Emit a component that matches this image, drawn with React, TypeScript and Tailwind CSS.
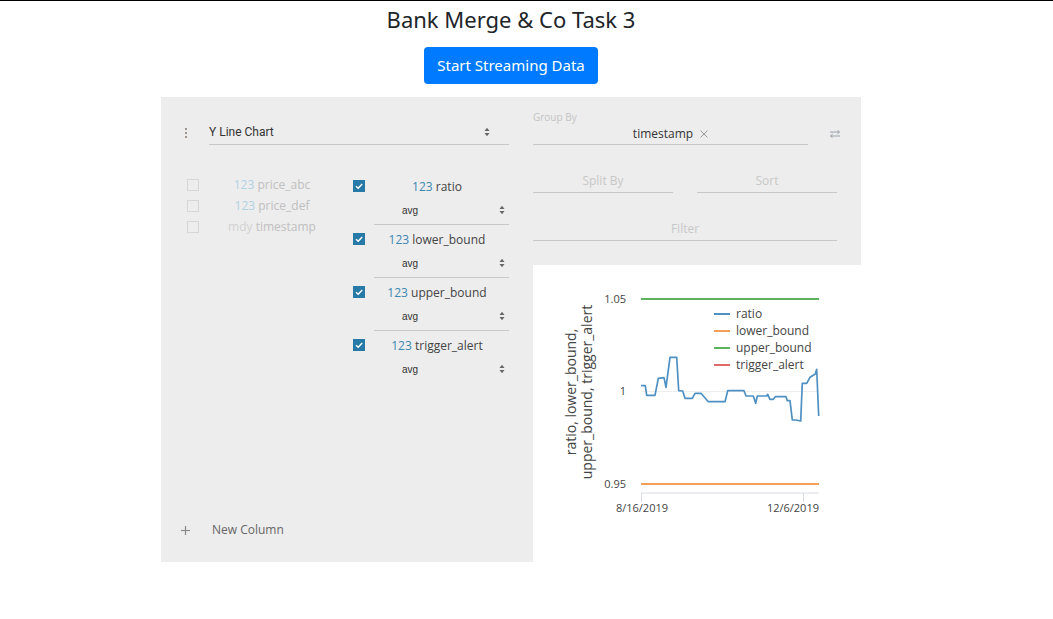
import React from "react";

const inactive = [
  { type: "123", name: "price_abc" },
  { type: "123", name: "price_def" },
  { type: "mdy", name: "timestamp" },
];

const active = ["ratio", "lower_bound", "upper_bound", "trigger_alert"];

const ratioPts =
  "641,385.7 645.3,385.7 646.7,395.3 655,395.3 658.3,378.3 664,377.7 666,387.3 670,357.3 676.7,357.3 678.7,390.7 682.7,391 685,398.3 692.3,398.3 695,393.3 701,393.3 708.3,401.7 725,401.7 727.7,390.7 744,390.7 746,396 753.3,396 755.7,403.3 757.3,396 766.7,396 767.7,394.3 770,399.3 773.3,399.3 775.3,396.7 786,396.7 787.3,400.7 790,400.7 792.3,420 795.7,420 800.7,421 802.3,383.3 806.7,383.3 810,377.3 815.3,374 816.7,369.3 818.7,416";

const legend = [
  { label: "ratio", color: "#4f90c3" },
  { label: "lower_bound", color: "#f5a05a" },
  { label: "upper_bound", color: "#5cb35c" },
  { label: "trigger_alert", color: "#e06a6a" },
];

function Arrows() {
  return (
    <svg width="6" height="10" viewBox="0 0 6 10" className="shrink-0">
      <polygon points="0.5,4 3,0.8 5.5,4" fill="#666" />
      <polygon points="0.5,6 3,9.2 5.5,6" fill="#666" />
    </svg>
  );
}

function Box({ on }: { on: boolean }) {
  if (!on) return <span className="block h-[12px] w-[12px] shrink-0 border border-[#d6d6d6]" />;
  return (
    <span className="flex h-[12px] w-[12px] shrink-0 items-center justify-center bg-[#2779a7]">
      <svg width="10" height="10" viewBox="0 0 10 10">
        <polyline points="2,5.2 4.2,7.3 8.2,3" fill="none" stroke="#fff" strokeWidth="1.4" />
      </svg>
    </span>
  );
}

function Chart() {
  return (
    <svg width="328" height="297" viewBox="533 265 328 297" className="block">
      <line x1="641" y1="391.5" x2="818" y2="391.5" stroke="#eeeeee" strokeWidth="1" />
      <line x1="641" y1="299" x2="819" y2="299" stroke="#5cb35c" strokeWidth="2" />
      <line x1="641" y1="484" x2="819" y2="484" stroke="#f5a05a" strokeWidth="2" />
      <polyline points={ratioPts} fill="none" stroke="#4f90c3" strokeWidth="1.7" strokeLinejoin="round" />
      <line x1="641" y1="493" x2="819" y2="493" stroke="#d8dce6" strokeWidth="1" />
      <line x1="641.5" y1="493" x2="641.5" y2="502" stroke="#d8dce6" strokeWidth="1" />
      <line x1="803.5" y1="493" x2="803.5" y2="502" stroke="#d8dce6" strokeWidth="1" />
      <g fontSize="11" fill="#444">
        <text x="626" y="303" textAnchor="end">1.05</text>
        <text x="626" y="395" textAnchor="end">1</text>
        <text x="626" y="488" textAnchor="end">0.95</text>
        <text x="642" y="512" textAnchor="middle">8/16/2019</text>
        <text x="819" y="512" textAnchor="end">12/6/2019</text>
      </g>
      <g fontSize="14" fill="#444" textAnchor="middle">
        <text x="576" y="392" transform="rotate(-90 576 392)">ratio, lower_bound,</text>
        <text x="592" y="392" transform="rotate(-90 592 392)">upper_bound, trigger_alert</text>
      </g>
      {legend.map((l, i) => (
        <g key={l.label}>
          <line x1="714" y1={314 + i * 17} x2="730" y2={314 + i * 17} stroke={l.color} strokeWidth="2" />
          <text x="736" y={318 + i * 17} fontSize="12" fill="#444">
            {l.label}
          </text>
        </g>
      ))}
    </svg>
  );
}

export default function App() {
  return (
    <div className="min-h-[619px] border-t border-black bg-white font-['Open_Sans',sans-serif]">
      <div className="flex w-[1022px] flex-col items-center">
        <h1 className="mt-[3px] font-['Noto_Sans',sans-serif] text-[22px] leading-[30px] text-[#212529]">
          Bank Merge &amp; Co Task 3
        </h1>
        <button className="mt-[13px] h-[37px] rounded-[4px] bg-[#007bff] px-[13px] font-['Noto_Sans',sans-serif] text-[15px] text-white">
          Start Streaming Data
        </button>

        <div className="mt-[13px] flex h-[465px] w-[700px]">
          {/* settings column */}
          <div className="flex w-[372px] flex-col bg-[#ededed] pt-[23px]">
            <div className="flex items-center pl-[22px]">
              <div className="flex w-[26px] flex-col gap-[2px] pl-[2px]">
                <span className="block h-[2px] w-[2px] bg-[#a0968c]" />
                <span className="block h-[2px] w-[2px] bg-[#a0968c]" />
                <span className="block h-[2px] w-[2px] bg-[#a0968c]" />
              </div>
              <div className="flex h-[25px] w-[300px] items-center justify-between border-b border-[#c8c8c8] pr-[19px] font-['Roboto',sans-serif] text-[12px] text-[#333]">
                <span>Y Line Chart</span>
                <Arrows />
              </div>
            </div>

            <div className="flex flex-1 items-start pl-[26px]">
              <div className="mt-[29px] flex flex-col">
                {inactive.map((c) => (
                  <div key={c.name} className="flex h-[21px] items-center">
                    <Box on={false} />
                    <span className="w-[146px] text-center text-[12px] text-[#c0c0c0]">
                      <span className={c.type === "mdy" ? "text-[#d2d2d2]" : "text-[#b0d3e4]"}>{c.type}</span> {c.name}
                    </span>
                  </div>
                ))}
              </div>
              <div className="ml-[8px] mt-[33px] flex flex-col gap-[6px]">
                {active.map((name, i) => (
                  <div key={name} className="flex items-start">
                    <div className="mt-[2px]">
                      <Box on />
                    </div>
                    <div className="w-[144px]">
                      <div className="h-[18px] text-center text-[12px] leading-[18px] text-[#444]">
                        <span className="text-[#3b88b2]">123</span> {name}
                      </div>
                      <div
                        className={
                          i < active.length - 1
                            ? "ml-[9px] mt-[4px] h-[25px] border-b border-[#c8c8c8]"
                            : "ml-[9px] mt-[4px] h-[25px]"
                        }
                      >
                        <div className="flex h-[20px] items-center justify-between pl-[28px] pr-[4px] font-['Liberation_Sans',sans-serif] text-[10px] text-[#333]">
                          <span>avg</span>
                          <Arrows />
                        </div>
                      </div>
                    </div>
                  </div>
                ))}
              </div>
            </div>

            <div className="mb-[22px] flex h-[20px] items-center pl-[20px]">
              <svg width="9" height="9" viewBox="0 0 9 9">
                <line x1="4.5" y1="0" x2="4.5" y2="9" stroke="#8a8a8a" strokeWidth="1.2" />
                <line x1="0" y1="4.5" x2="9" y2="4.5" stroke="#8a8a8a" strokeWidth="1.2" />
              </svg>
              <span className="ml-[22px] text-[12px] text-[#666]">New Column</span>
            </div>
          </div>

          {/* right column */}
          <div className="flex flex-1 flex-col">
            <div className="h-[168px] bg-[#ededed] pr-[24px] pt-[14px]">
              <div className="text-[10px] leading-[12px] text-[#c4c4c4]">Group By</div>
              <div className="flex items-center">
                <div className="flex h-[22px] w-[275px] items-center justify-center gap-[7px] border-b border-[#c8c8c8] text-[12px] text-[#333]">
                  <span>timestamp</span>
                  <svg width="8" height="8" viewBox="0 0 8 8">
                    <line x1="0.5" y1="0.5" x2="7.5" y2="7.5" stroke="#9a9a9a" strokeWidth="1" />
                    <line x1="7.5" y1="0.5" x2="0.5" y2="7.5" stroke="#9a9a9a" strokeWidth="1" />
                  </svg>
                </div>
                <div className="-mr-[3px] flex flex-1 justify-end">
                  <svg width="10" height="8" viewBox="0 0 10 8">
                    <line x1="0" y1="2" x2="9.5" y2="2" stroke="#9aa0a8" strokeWidth="1" />
                    <polyline points="7.3,0 9.5,2 7.3,4" fill="none" stroke="#9aa0a8" strokeWidth="1" />
                    <line x1="0.5" y1="6" x2="10" y2="6" stroke="#9aa0a8" strokeWidth="1" />
                    <polyline points="2.7,4 0.5,6 2.7,8" fill="none" stroke="#9aa0a8" strokeWidth="1" />
                  </svg>
                </div>
              </div>
              <div className="mt-[24px] flex gap-[24px]">
                <div className="flex h-[24px] w-[140px] items-center justify-center border-b border-[#c8c8c8] text-[12px] text-[#c8c8c8]">
                  Split By
                </div>
                <div className="flex h-[24px] w-[140px] items-center justify-center border-b border-[#c8c8c8] text-[12px] text-[#c8c8c8]">
                  Sort
                </div>
              </div>
              <div className="mt-[24px] flex h-[24px] w-[304px] items-center justify-center border-b border-[#c8c8c8] text-[12px] text-[#c8c8c8]">
                Filter
              </div>
            </div>
            <div className="flex-1 bg-white">
              <Chart />
            </div>
          </div>
        </div>
      </div>
    </div>
  );
}
